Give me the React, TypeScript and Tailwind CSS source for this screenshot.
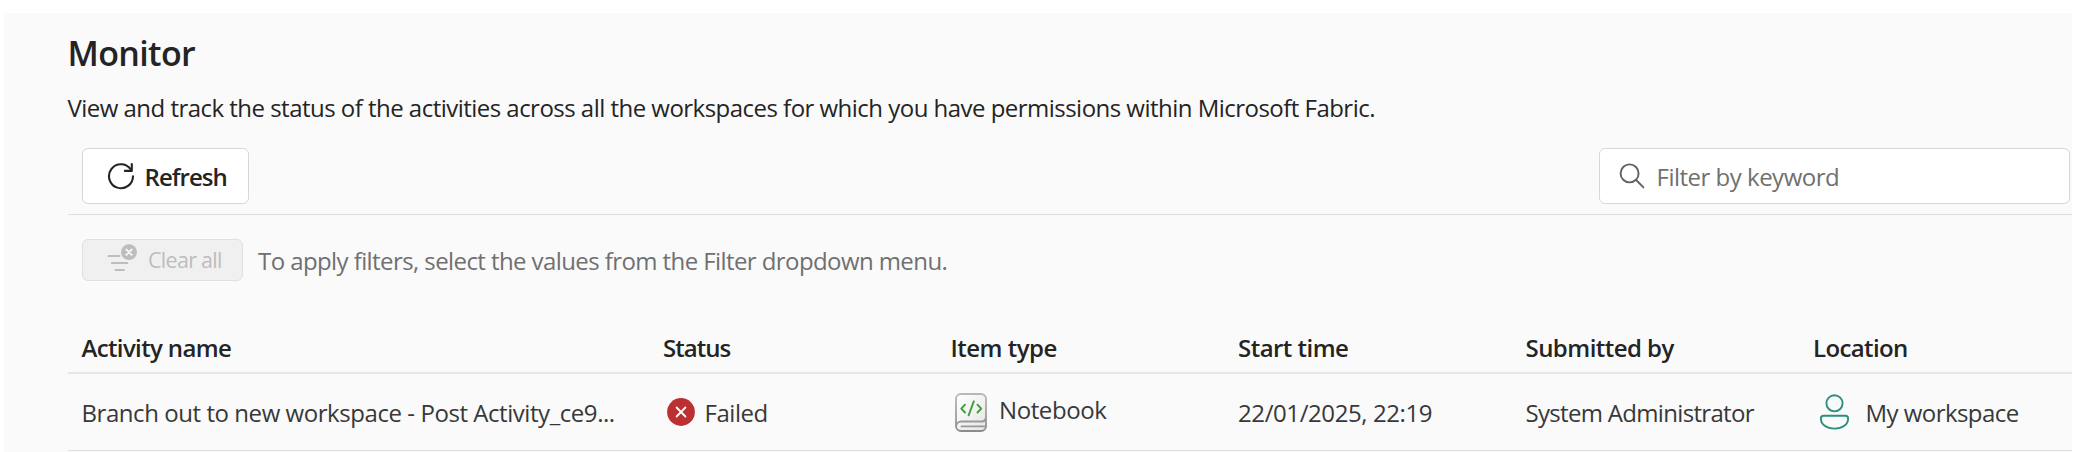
import React from "react";

function RefreshIcon() {
  return (
    <svg width="28" height="28" viewBox="0 0 28 28" fill="none" stroke="#242424" strokeWidth="2.1" strokeLinecap="round" strokeLinejoin="round">
      <path d="M26 14.2A12 12 0 1 1 23.800 7.300" />
      <path d="M24.8 2v6.9h-6.9" />
    </svg>
  );
}

function SearchIcon() {
  return (
    <svg width="26" height="26" viewBox="0 0 26 26" fill="none" stroke="#616161" strokeWidth="1.9" strokeLinecap="round">
      <circle cx="10.6" cy="10.4" r="9" />
      <path d="M17.2 17l7.2 7.4" />
    </svg>
  );
}

function ClearFilterIcon() {
  return (
    <svg width="30" height="28" viewBox="0 0 30 28" fill="none" strokeLinecap="round">
      <path d="M1.5 12h11M4.8 19h15.5M8.5 26h8.5" stroke="#bdbdbd" strokeWidth="1.9" />
      <circle cx="22" cy="8.2" r="7.9" fill="#bdbdbd" />
      <path d="M19.3 5.5l5.4 5.4M24.7 5.5l-5.4 5.4" stroke="#f5f5f5" strokeWidth="1.9" />
    </svg>
  );
}

function FailedIcon() {
  return (
    <svg width="28" height="28" viewBox="0 0 28 28" fill="none">
      <circle cx="14" cy="14" r="13.9" fill="#bc2f32" />
      <path d="M9.6 9.5l8.8 9M18.4 9.5l-8.8 9" stroke="#fff" strokeWidth="1.8" strokeLinecap="round" />
    </svg>
  );
}

function NotebookIcon() {
  return (
    <svg width="32" height="39" viewBox="0 0 32 39" fill="none">
      <defs>
        <linearGradient id="cover" x1="0" y1="0" x2="1" y2="1">
          <stop offset="0" stopColor="#ffffff" />
          <stop offset="1" stopColor="#e6e6e6" />
        </linearGradient>
        <linearGradient id="edge" x1="0" y1="0" x2="0" y2="1">
          <stop offset="0" stopColor="#b8b8b8" />
          <stop offset="1" stopColor="#8c8c8c" />
        </linearGradient>
      </defs>
      <path d="M6 1h20a5 5 0 0 1 5 5v27a5 5 0 0 1-5 5H6a5 5 0 0 1-5-5V6a5 5 0 0 1 5-5z" fill="url(#cover)" stroke="url(#edge)" strokeWidth="1.8" />
      <path d="M1.2 33.5a5 5 0 0 1 5-5H27a4 4 0 0 0 3.8-3.2" stroke="#999" strokeWidth="1.8" />
      <path d="M31 33.4H6.5" stroke="#999" strokeWidth="1.8" strokeLinecap="round" />
      <path d="M10 11.7L6.3 15.6l3.7 3.9M22.5 11.7l3.7 3.9-3.7 3.9M18.8 8.3l-5.2 14" stroke="#3f9c3a" strokeWidth="1.9" strokeLinecap="round" strokeLinejoin="round" />
    </svg>
  );
}

function PersonIcon() {
  return (
    <svg width="30" height="36" viewBox="0 0 30 36" fill="none" stroke="#2a8f7c" strokeWidth="1.9">
      <circle cx="14.5" cy="9.3" r="8.1" />
      <path d="M3.6 21.700h21.800a2.700 2.700 0 0 1 2.700 2.700c0 6.200-5.600 10.200-13.600 10.200S.9 30.600.9 24.400a2.700 2.700 0 0 1 2.700-2.700z" />
    </svg>
  );
}

const columns = "grid grid-cols-[581.5px_287.5px_287.5px_287.5px_287.5px_1fr] pl-[14px]";

export default function App() {
  return (
    <div className="h-[452px] w-[2093px] overflow-hidden bg-white pt-[13px] pr-[21px] pl-1 font-['Open_Sans',sans-serif] text-[24px] leading-[32px] whitespace-nowrap text-[#242424]">
      <main className="h-[439px] bg-[#fafafa] pt-[18px] pl-[63.5px]">
        <h1 className="text-[34px] leading-[44px] font-semibold tracking-[-0.643px]">Monitor</h1>
        <p className="mt-[17px] tracking-[-0.525px]">
          View and track the status of the activities across all the workspaces for which you have permissions within Microsoft Fabric.
        </p>

        <div className="mt-6 flex h-[67px] items-start justify-between border-b border-[#dedede] pr-[2px] pl-[14px]">
          <button className="flex h-14 w-[167.5px] items-center rounded-md border border-[#d6d6d6] bg-white pl-[24px] font-semibold tracking-[-0.952px]">
            <RefreshIcon />
            <span className="ml-[10px] pt-0.5">Refresh</span>
          </button>
          <div className="flex h-14 w-[471px] items-center rounded-md border border-[#d6d6d6] bg-white pl-[19px] text-[#707070]">
            <SearchIcon />
            <span className="ml-[11.5px] pt-0.5 tracking-[-0.5px]">Filter by keyword</span>
          </div>
        </div>

        <div className="mt-6 flex h-[42px] items-center pl-[14px]">
          <button className="flex h-[42px] w-[161.5px] items-center rounded-md border border-[#e0e0e0] bg-[#f0f0f0] pl-[24px] text-[21.5px] tracking-[-0.71px] text-[#bdbdbd]" disabled>
            <span className="-mt-[5px]"><ClearFilterIcon /></span>
            <span className="ml-[11.5px]">Clear all</span>
          </button>
          <span className="ml-[15px] pt-0.5 tracking-[-0.585px] text-[#707070]">To apply filters, select the values from the Filter dropdown menu.</span>
        </div>

        <div className={`${columns} h-[93px] items-end border-b-2 border-[#e6e6e6] pb-[8.5px] font-semibold`}>
          <span className="tracking-[-0.635px]">Activity name</span>
          <span className="tracking-[-0.95px]">Status</span>
          <span className="tracking-[-0.507px]">Item type</span>
          <span className="tracking-[-0.531px]">Start time</span>
          <span className="tracking-[-0.537px]">Submitted by</span>
          <span className="tracking-[-0.623px]">Location</span>
        </div>

        <div className={`${columns} h-[77px] items-center border-b border-[#dedede] text-[#383838]`}>
          <span className="pt-0.5 tracking-[-0.44px]">Branch out to new workspace - Post Activity_ce9...</span>
          <span className="flex items-center pl-[4px] tracking-[-0.46px]">
            <FailedIcon />
            <span className="ml-[9.5px] pt-0.5">Failed</span>
          </span>
          <span className="flex items-center pl-[4.5px] tracking-[-0.4px]">
            <NotebookIcon />
            <span className="-mt-1 ml-[12px]">Notebook</span>
          </span>
          <span className="pt-0.5 tracking-[-0.41px]">22/01/2025, 22:19</span>
          <span className="pt-0.5 tracking-[-0.684px]">System Administrator</span>
          <span className="flex items-center pl-[7px] tracking-[-0.545px]">
            <PersonIcon />
            <span className="ml-[15.5px] pt-0.5">My workspace</span>
          </span>
        </div>
      </main>
    </div>
  );
}
